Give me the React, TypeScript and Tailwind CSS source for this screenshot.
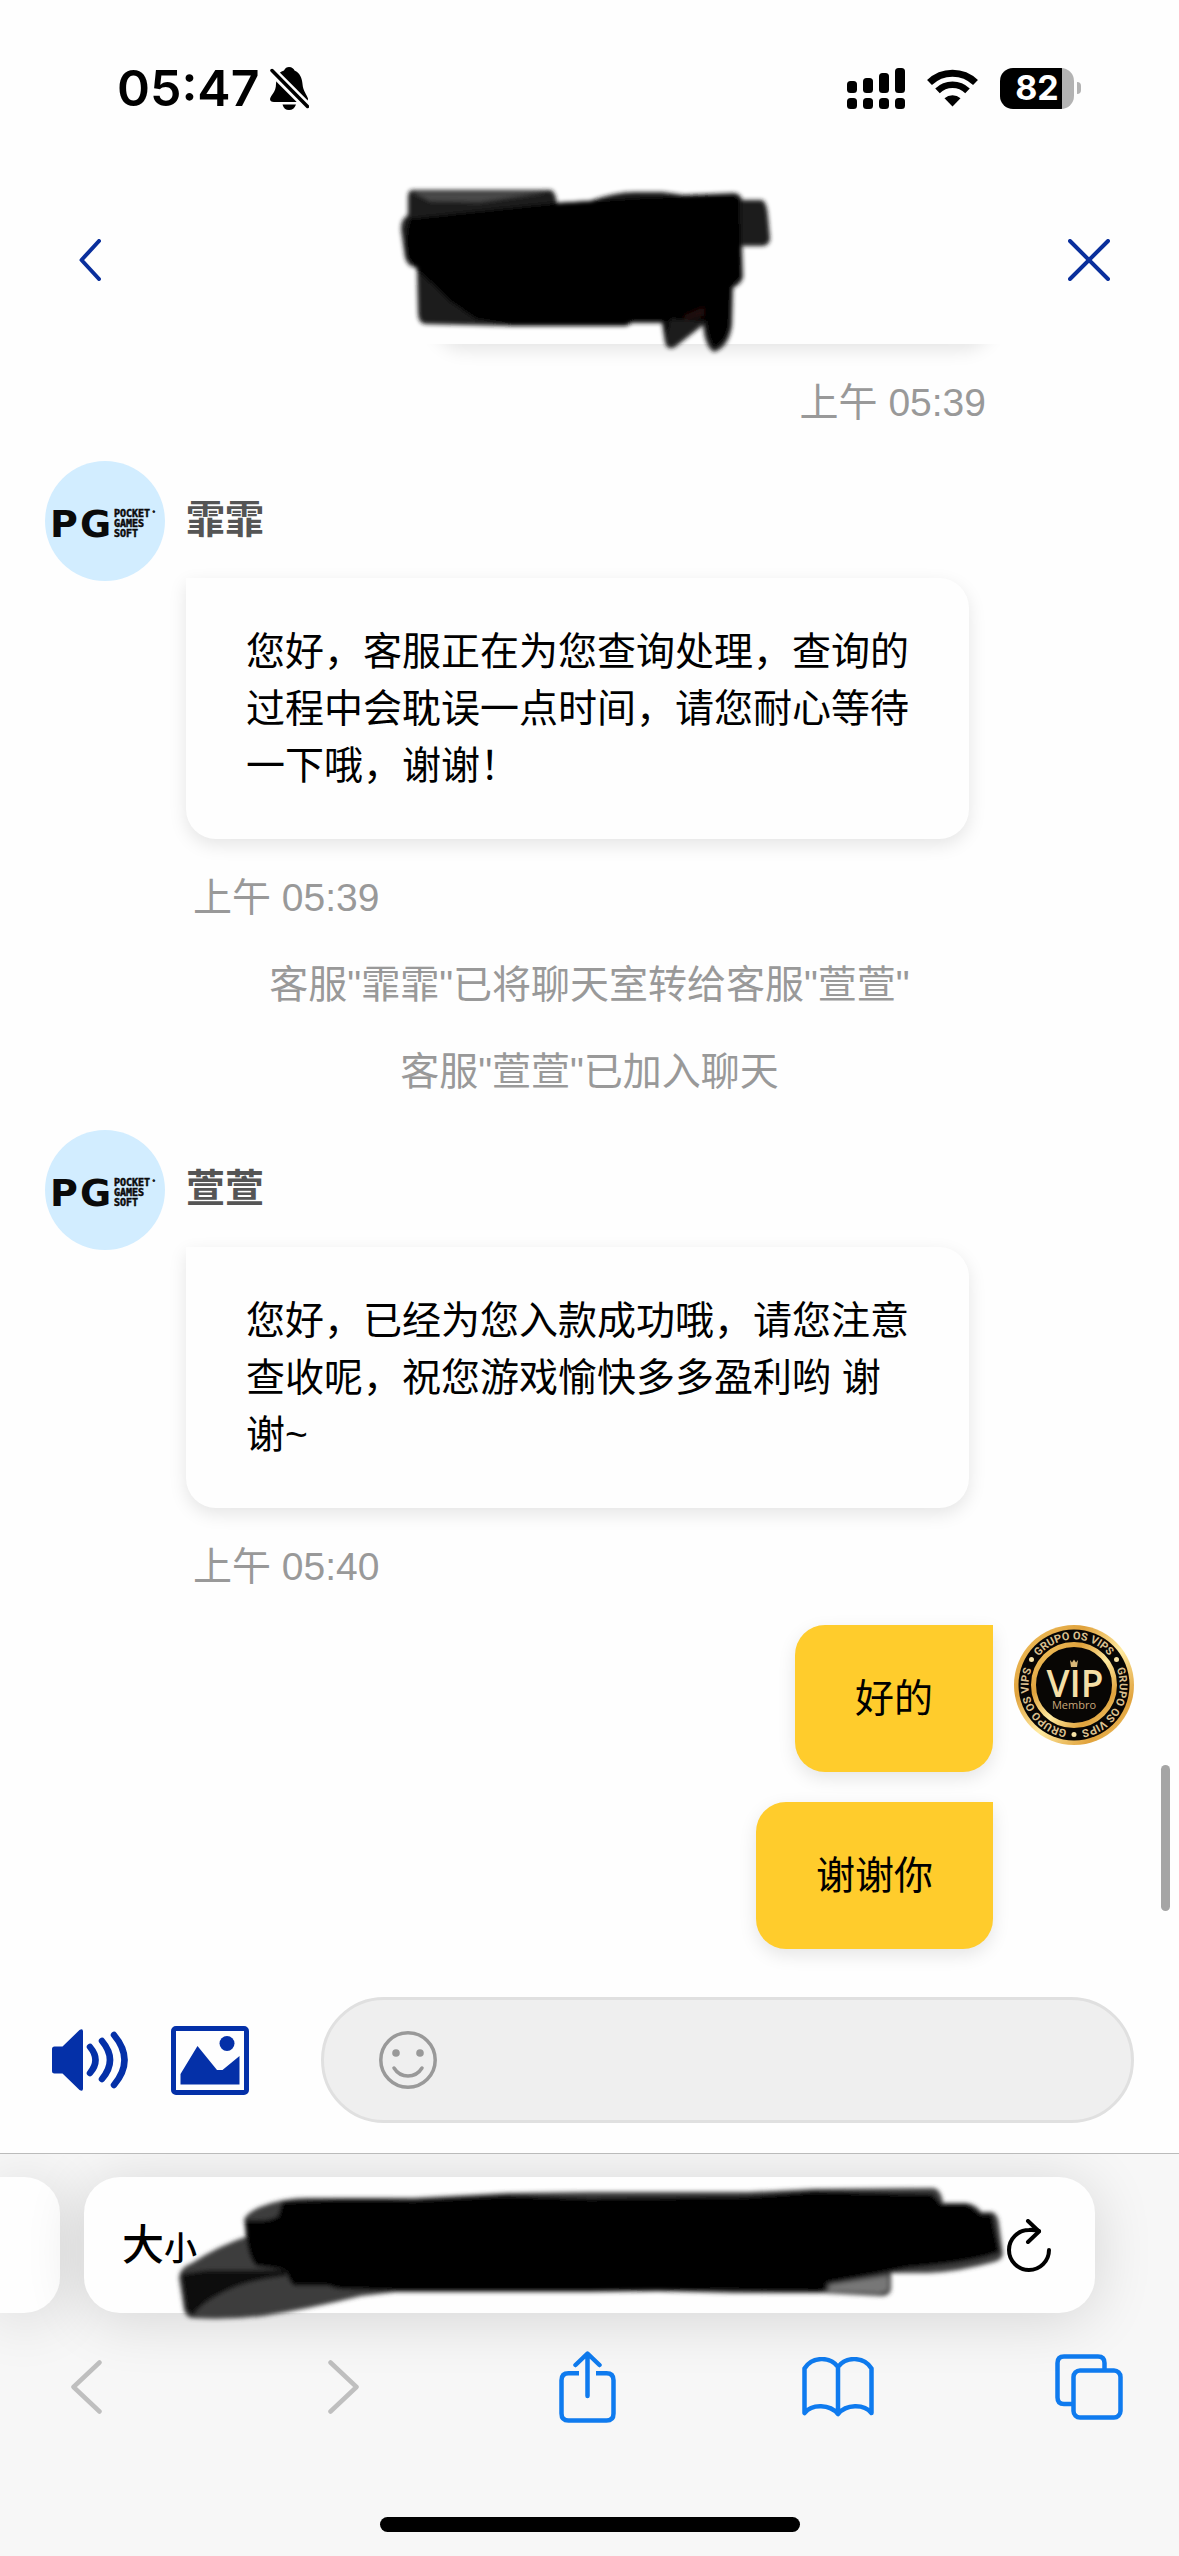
import React, { useState } from 'react';

interface Message {
  id: number;
  text: string;
}

interface AgentMessage {
  name: string;
  text: string;
  time: string;
}

const firstReply: AgentMessage = {
  name: '霏霏',
  text: '您好，客服正在为您查询处理，查询的过程中会耽误一点时间，请您耐心等待一下哦，谢谢！',
  time: '上午 05:39',
};

const secondReply: AgentMessage = {
  name: '萱萱',
  text: '您好，已经为您入款成功哦，请您注意查收呢，祝您游戏愉快多多盈利哟 谢谢~',
  time: '上午 05:40',
};

const notices = ['客服"霏霏"已将聊天室转给客服"萱萱"', '客服"萱萱"已加入聊天'];

const ownMessages: Message[] = [
  { id: 1, text: '好的' },
  { id: 2, text: '谢谢你' },
];

const StatusBar: React.FC = () => (
  <div className="flex h-[176px] items-center justify-between pl-[117px] pr-[98px] font-['Inter',sans-serif]">
    <div className="flex items-center gap-[11px]">
      <span className="text-[50px] font-semibold leading-none text-black">05:47</span>
      <svg className="h-[43px] w-[39px]" viewBox="0 0 39 43">
        <path d="M19 0C22 0 24 2 24.500 3.500C30 6 32 11 32.500 17C33 24 37 28 38 31.500Q38 35 35 35H4Q0 35 0 32C1 28 6 25 6 17C6.500 9 9 5 14 3.500C15 1 17 0 19 0Z" />
        <path d="M12.500 37.500H26Q24 43 19 43Q14 43 12.500 37.500Z" />
        <path d="M1 3L38 40" stroke="#fefefe" strokeWidth="9" />
        <path d="M2 3.500L37.500 39.500" stroke="#000" strokeWidth="3.500" strokeLinecap="round" />
      </svg>
    </div>
    <div className="flex items-center">
      <svg className="mr-[22px] h-[41px] w-[58px]" viewBox="0 0 58 41">
        <rect x="0" y="13" width="10" height="12" rx="3.500" />
        <rect x="16" y="10" width="10" height="15" rx="3.500" />
        <rect x="32" y="5" width="10" height="20" rx="3.500" />
        <rect x="48" y="0" width="10" height="25" rx="3.500" />
        <rect x="0" y="30" width="10" height="11" rx="3.500" />
        <rect x="16" y="30" width="10" height="11" rx="3.500" />
        <rect x="32" y="30" width="10" height="11" rx="3.500" />
        <rect x="48" y="30" width="10" height="11" rx="3.500" />
      </svg>
      <svg className="mr-[22px] h-[38px] w-[51px]" viewBox="0 0 51 38" fill="none" stroke="#000">
        <path d="M2.500 13.500A33 33 0 0 1 48.500 13.500" strokeWidth="7" />
        <path d="M10.500 21.800A21.500 21.500 0 0 1 40.500 21.800" strokeWidth="6.500" />
        <path d="M25.500 37.500L17.500 29.300A12 12 0 0 1 33.500 29.300Z" fill="#000" stroke="none" />
      </svg>
      <div className="flex h-[41px] w-[74px] items-center justify-center rounded-[13px] bg-linear-to-r from-black from-84% to-[#b3b3b3] to-84% text-[34px] font-bold leading-none text-white">
        82
      </div>
      <div className="ml-[3px] h-3 w-1 rounded-r-full bg-[#b3b3b3]" />
    </div>
  </div>
);

const TitleMark: React.FC = () => (
  <svg
    className="absolute left-1/2 top-[11px] h-[168px] w-[370px] -translate-x-[190px] overflow-visible"
    viewBox="0 0 370 168"
  >
    <defs>
      <filter id="brush" x="-5%" y="-5%" width="110%" height="110%">
        <feGaussianBlur stdDeviation="2" />
      </filter>
    </defs>
    <g filter="url(#brush)">
      <path
        fill="#1a1a1a"
        d="M12 3H150Q155 3 157 16L190 14Q215 5 235 5H262L284 8L334 6Q341 7 342 13H362Q367 15 368 30L370 52Q369 59 362 59H342L343 90Q342 96 333 101L332 138Q329 160 314 165Q305 160 303 138L275 160Q267 164 265 155L262 136H232L226 139H112L25 137Q18 136 18 125L17 80Q7 80 5 70L1 42Q1 32 8 28V10Q8 4 12 3Z"
      />
      <path
        fill="#000"
        d="M10 32Q60 26 157 16L190 14L250 10L334 8L340 13L341 90L331 100L329 138Q325 156 314 160Q308 150 306 134L270 132L266 150L264 134H232L226 138H112L76 132L50 114L36 100L18 84L8 70Q4 50 10 32Z"
      />
      <path fill="#555" d="M12 5H148L80 15L30 14Z" opacity="0.8" />
      <path fill="#2c0f0b" d="M285 128L304 120V129L284 133Z" opacity="0.8" />
    </g>
  </svg>
);

const Header: React.FC = () => (
  <header className="relative z-10 flex h-[168px] items-center justify-between bg-[#fefefe] px-[66px]">
    <button type="button" aria-label="返回" className="flex h-12 w-12 items-center justify-center">
      <svg className="h-[42px] w-[22px]" viewBox="0 0 22 42" fill="none" stroke="#0a2f9c" strokeWidth="4" strokeLinecap="round" strokeLinejoin="round">
        <path d="M20 2L2.500 21L20 40" />
      </svg>
    </button>
    <TitleMark />
    <button type="button" aria-label="关闭" className="flex h-12 w-12 items-center justify-center">
      <svg className="h-[42px] w-[42px]" viewBox="0 0 42 42" stroke="#0a2f9c" strokeWidth="4" strokeLinecap="round">
        <path d="M2 2L40 40M40 2L2 40" />
      </svg>
    </button>
  </header>
);

const AgentAvatar: React.FC = () => (
  <svg className="h-[120px] w-[120px] shrink-0" viewBox="0 0 120 120">
    <circle cx="60" cy="60" r="60" fill="#d2edff" />
    <g fontFamily="DejaVu Sans, sans-serif" fontWeight="700" fill="#0a0a0a">
      <text x="5" y="76" fontSize="38">P</text>
      <text x="35" y="76" fontSize="38">G</text>
    </g>
    <g fontFamily="DejaVu Sans Mono, monospace" fontWeight="700" fontSize="10" fill="#0a0a0a" stroke="#0a0a0a" strokeWidth="0.500">
      <text x="69" y="56">POCKET</text>
      <text x="69" y="66">GAMES</text>
      <text x="69" y="76">SOFT</text>
      <text x="107" y="54" fontSize="6">°</text>
    </g>
  </svg>
);

const VipAvatar: React.FC = () => (
  <svg className="h-[120px] w-[120px] shrink-0" viewBox="0 0 120 120">
    <defs>
      <linearGradient id="gold" x1="0" y1="0" x2="1" y2="1">
        <stop offset="0" stopColor="#f3c766" />
        <stop offset="0.300" stopColor="#e0a23c" />
        <stop offset="0.550" stopColor="#ffeaa0" />
        <stop offset="0.800" stopColor="#e0a23c" />
        <stop offset="1" stopColor="#f6d27a" />
      </linearGradient>
      <path id="rim" d="M20.600 37.300A45.500 45.500 0 1 1 20.500 82.500A45.500 45.500 0 0 1 20.600 37.300" />
    </defs>
    <circle cx="60" cy="60" r="60" fill="url(#gold)" />
    <circle cx="60" cy="60" r="55.500" fill="#080604" />
    <circle cx="60" cy="60" r="40.500" fill="#080604" stroke="url(#gold)" strokeWidth="5" />
    <g fill="#dcc08f" fontFamily="Roboto, sans-serif" fontWeight="700" fontSize="11" textAnchor="middle">
      <text><textPath href="#rim" startOffset="16.6%">GRUPO OS VIPS</textPath></text>
      <text><textPath href="#rim" startOffset="50%">GRUPO OS VIPS</textPath></text>
      <text><textPath href="#rim" startOffset="83.3%">GRUPO OS VIPS</textPath></text>
    </g>
    <g fill="#f6e2a6">
      <circle cx="17.500" cy="34.500" r="2.500" />
      <circle cx="102.500" cy="34.500" r="2.500" />
      <circle cx="60" cy="109.500" r="2.500" />
    </g>
    <path d="M56 35L58 37.500L60 34.500L62 37.500L64 35L63 42H57Z" fill="#d9b878" />
    <g textAnchor="middle" fontFamily="Open Sans, sans-serif">
      <text x="61" y="72" fontSize="37" fontWeight="600" fill="#f5dfa6">VIP</text>
      <text x="60" y="84" fontSize="11" fill="#c9a87a">Membro</text>
    </g>
  </svg>
);

const AgentBlock: React.FC<{ message: AgentMessage }> = ({ message }) => (
  <li className="flex items-start gap-[21px] pr-[165px]">
    <AgentAvatar />
    <div className="flex-1">
      <div className="flex h-[117px] items-center font-bold text-[#555]">{message.name}</div>
      <p className="rounded-[30px] rounded-tl-none bg-[#fefefe] px-[60px] py-[45px] text-black shadow-[0_6px_18px_rgba(0,0,0,0.1)]">
        {message.text}
      </p>
      <time className="ml-[7px] mt-[30px] block text-[#999]">{message.time}</time>
    </div>
  </li>
);

const OwnMessage: React.FC<{ text: string; withAvatar: boolean }> = ({ text, withAvatar }) => (
  <li className="flex items-start justify-end gap-[21px]">
    <p className="rounded-[30px] rounded-tr-none bg-[#ffcc2c] px-[60px] py-[45px] text-black shadow-[0_6px_18px_rgba(0,0,0,0.1)]">
      {text}
    </p>
    {withAvatar ? <VipAvatar /> : <div className="w-[120px] shrink-0" />}
  </li>
);

const Composer: React.FC = () => {
  const [draft, setDraft] = useState('');

  return (
    <form className="flex items-center px-[45px] pb-[30px] pt-6" onSubmit={(e) => e.preventDefault()}>
      <button type="button" aria-label="声音" className="ml-[7px] mr-[43px]">
        <svg className="block h-[62px] w-[76px]" viewBox="0 0 76 62" fill="#0430a8">
          <path d="M2.500 17.500H10.500L27.500 1Q31 -1 31 2.500V59.500Q31 63 27.500 61L10.500 44.500H2.500Q0 44.500 0 42V20Q0 17.500 2.500 17.500Z" />
          <g fill="none" stroke="#0430a8" strokeWidth="6.500" strokeLinecap="round">
            <path d="M38 18Q49 31 38 44" />
            <path d="M50 12Q66 31 50 50" />
            <path d="M62 6Q83 31 62 56" />
          </g>
        </svg>
      </button>
      <button type="button" aria-label="图片" className="mr-[72px]">
        <svg className="block h-[69px] w-[78px]" viewBox="0 0 78 69" fill="#0430a8">
          <rect x="2.500" y="2.500" width="73" height="64" rx="2.500" fill="none" stroke="#0430a8" strokeWidth="5" />
          <path d="M9.500 48L26.500 20L46 44H51.500L68.500 30V58.500H9.500Z" />
          <circle cx="56" cy="17.500" r="7.500" />
        </svg>
      </button>
      <div className="flex h-[126px] flex-1 items-center gap-6 rounded-full border-[3px] border-[#e0e0e0] bg-[#efefef] px-[55px]">
        <button type="button" aria-label="表情" className="shrink-0">
          <svg className="block h-[58px] w-[58px]" viewBox="0 0 58 58" fill="none" stroke="#999" strokeWidth="3.500" strokeLinecap="round">
            <circle cx="29" cy="29" r="27.200" />
            <circle cx="17" cy="22" r="3.800" fill="#999" stroke="none" />
            <circle cx="41" cy="22" r="3.800" fill="#999" stroke="none" />
            <path d="M15 37Q20 45 29 45T43 37" />
          </svg>
        </button>
        <input
          type="text"
          aria-label="输入消息"
          value={draft}
          onChange={(e) => setDraft(e.target.value)}
          className="min-w-0 flex-1 bg-transparent text-black outline-none"
          autoComplete="off"
        />
      </div>
    </form>
  );
};

const AddressMark: React.FC = () => (
  <svg
    className="pointer-events-none absolute left-[94px] top-[9px] h-[134px] w-[826px] overflow-visible"
    viewBox="0 0 826 134"
  >
    <g filter="url(#brush)">
      <path
        fill="#3c3c3c"
        d="M1 92Q1 82 14 77Q40 60 70 50L66 34Q68 27 82 21Q104 12 130 12H236L330 7L412 6H570L637 3L755 2Q763 3 765 17H788Q799 19 803 26H814Q820 28 821 38L825 68Q824 74 816 76Q780 86 750 87H713V104Q711 110 703 110L645 107H555L480 105L412 106H217L183 110Q130 123 85 130Q50 134 14 132Q8 131 6 124Z"
      />
      <path
        fill="#000"
        d="M104 16Q150 12 236 14L330 9L412 12L570 10L637 5L755 8L763 18H790L803 28H814L822 66Q800 76 730 82L700 88L649 97Q650 106 640 106L555 105H217L160 103L150 100H116Q110 95 108 84L78 80Q68 70 67 34Q90 36 100 30Z"
      />
      <path fill="#111" d="M3 88L30 84H108V90Q70 94 46 106Q22 118 15 130L8 124Z" />
      <path fill="#777" d="M652 99L710 90V104L702 107L650 105Z" />
    </g>
  </svg>
);

const BrowserBar: React.FC = () => {
  const [address, setAddress] = useState('');

  return (
    <footer className="overflow-hidden border-t-[1px] border-[#bbb] bg-[#f7f7f7] pb-6 pt-[23px]">
      <div className="flex gap-[24px] pr-[84px]">
        <div className="h-[136px] w-[60px] shrink-0 rounded-r-[36px] bg-[#fefefe] shadow-[0_6px_60px_rgba(0,0,0,0.14)]" />
        <div className="relative flex h-[136px] flex-1 items-center rounded-[36px] bg-[#fefefe] pl-[38px] pr-[44px] shadow-[0_6px_60px_rgba(0,0,0,0.14)]">
          <button type="button" className="flex items-baseline pt-1 font-medium text-black">
            <span className="text-[42px]">大</span>
            <span className="text-[33px]">小</span>
          </button>
          <input
            type="text"
            aria-label="网址"
            value={address}
            onChange={(e) => setAddress(e.target.value)}
            className="min-w-0 flex-1 bg-transparent text-center text-black outline-none"
            spellCheck="false"
          />
          <AddressMark />
          <button type="button" aria-label="重新载入">
            <svg className="block h-[53px] w-[44px]" viewBox="0 0 44 53" fill="none" stroke="#000" strokeWidth="4" strokeLinecap="round" strokeLinejoin="round">
              <path d="M42 31A20 20 0 1 1 22 11Q27 10.500 32 12" />
              <path d="M21 2L32 12.500L21 23" />
            </svg>
          </button>
        </div>
      </div>
      <nav className="mt-9 flex h-[76px] items-center justify-between pl-[52px] pr-[56px]">
        <button type="button" aria-label="后退" className="flex w-[68px] justify-center">
          <svg className="h-[54px] w-[31px]" viewBox="0 0 31 54" fill="none" stroke="#bfbfbf" strokeWidth="4.500" strokeLinecap="round" strokeLinejoin="round">
            <path d="M28.500 2.500L2.500 27L28.500 51.500" />
          </svg>
        </button>
        <button type="button" aria-label="前进" className="flex w-[68px] justify-end pr-3">
          <svg className="h-[54px] w-[31px]" viewBox="0 0 31 54" fill="none" stroke="#bfbfbf" strokeWidth="4.500" strokeLinecap="round" strokeLinejoin="round">
            <path d="M2.500 2.500L28.500 27L2.500 51.500" />
          </svg>
        </button>
        <button type="button" aria-label="分享" className="flex w-[68px] justify-center">
          <svg className="h-[72px] w-[57px]" viewBox="0 0 57 72" fill="none" stroke="#0f7bef" strokeWidth="4.500" strokeLinecap="round" strokeLinejoin="round">
            <path strokeLinecap="butt" d="M20 22.200H9.500Q2.500 22.200 2.500 29.200V62.500Q2.500 69.500 9.500 69.500H47.500Q54.500 69.500 54.500 62.500V29.200Q54.500 22.200 47.500 22.200H37" />
            <path d="M28.500 3V45M16.500 14L28.500 2.500L40.500 14" />
          </svg>
        </button>
        <button type="button" aria-label="书签" className="flex w-[68px] justify-center">
          <svg className="h-[60px] w-[72px] shrink-0" viewBox="0 0 72 60" fill="none" stroke="#0f7bef" strokeWidth="4.500" strokeLinejoin="round">
            <path d="M2.500 56V11.500C10 -0.500 28 -1 36 10C44 -1 62 -0.500 69.500 11.500V56C62 46.500 44 47 36 57C28 47 10 46.500 2.500 56ZM36 10V57" />
          </svg>
        </button>
        <button type="button" aria-label="标签页" className="flex w-[68px] justify-center">
          <svg className="h-[66px] w-[68px]" viewBox="0 0 68 66" fill="none" stroke="#0f7bef" strokeWidth="4.500">
            <path d="M49.500 15V9Q49.500 2.500 43 2.500H9Q2.500 2.500 2.500 9V43.500Q2.500 50 9 50H17" />
            <rect x="18.500" y="16.500" width="47" height="47" rx="6.500" />
          </svg>
        </button>
      </nav>
      <div className="mx-auto mt-[92px] h-[15px] w-[420px] rounded-full bg-black" />
    </footer>
  );
};

const App: React.FC = () => {
  return (
    <div
      lang="zh-CN"
      className="flex min-h-screen flex-col bg-[#fefefe] font-['Liberation_Sans','Noto_Sans_CJK_SC',sans-serif] text-[39px] leading-[57px]"
    >
      <StatusBar />
      <Header />

      {/* Conversation */}
      <main className="relative flex-1 px-[45px] pb-[23px]">
        <ul className="flex flex-col gap-[30px]">
          {/* Earlier message, scrolled up under the header */}
          <li className="-mt-[60px] flex flex-col items-end gap-[30px] pr-[141px]">
            <div className="h-[60px] w-[59%] rounded-[30px] rounded-tr-none bg-[#ffcc2c] shadow-[0_6px_18px_rgba(0,0,0,0.1)]" />
            <time className="mr-[7px] text-[#999]">上午 05:39</time>
          </li>
          <AgentBlock message={firstReply} />
          {notices.map((notice) => (
            <li key={notice} className="text-center text-[#999]">
              {notice}
            </li>
          ))}
          <AgentBlock message={secondReply} />
          {ownMessages.map((message, index) => (
            <OwnMessage key={message.id} text={message.text} withAvatar={index === 0} />
          ))}
        </ul>
        <div className="absolute bottom-[62px] right-[9px] h-[146px] w-[9px] rounded-full bg-[#a5a5a5]" />
      </main>

      <Composer />
      <BrowserBar />
    </div>
  );
};

export default App;
